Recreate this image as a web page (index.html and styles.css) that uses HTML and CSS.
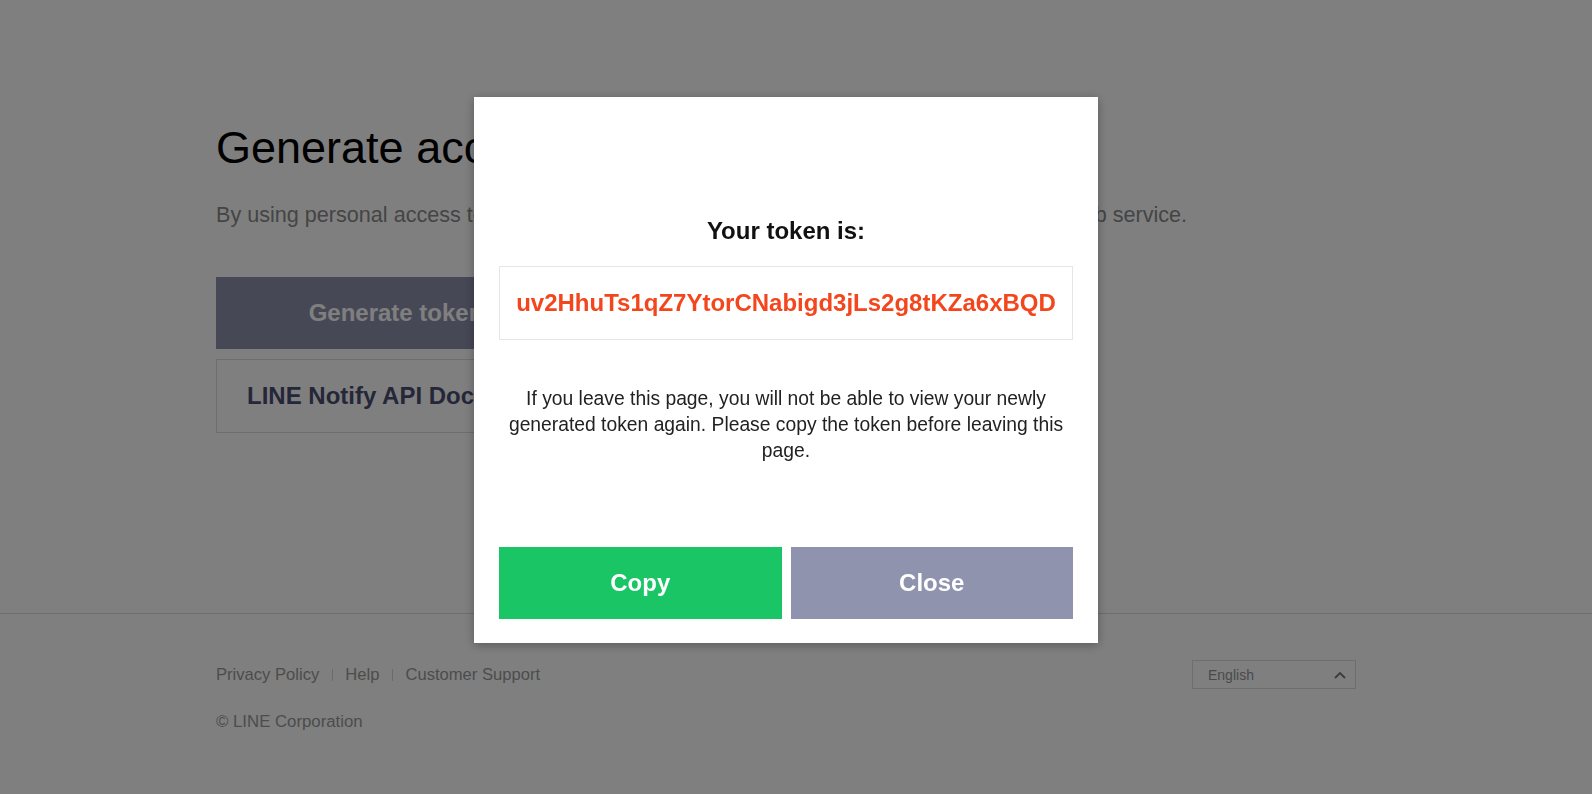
FILE: index.html
```html
<!DOCTYPE html>
<html lang="en">
<head>
<meta charset="utf-8">
<title>LINE Notify</title>
<link rel="stylesheet" href="styles.css">
</head>
<body>
<div class="page">
  <main class="main">
    <div class="container">
      <h1 class="title">Generate access token (For developers)</h1>
      <p class="desc">By using personal access tokens, you can configure notifications without having to add a web service.</p>
      <div class="actions">
        <button class="btn-generate">Generate token</button>
        <a class="doc-link" href="#">LINE Notify API Document</a>
      </div>
    </div>
  </main>
  <footer class="footer">
    <div class="container">
      <div class="footer-row">
        <nav class="footer-links">
          <a href="#">Privacy Policy</a>
          <span class="sep"></span>
          <a href="#">Help</a>
          <span class="sep"></span>
          <a href="#">Customer Support</a>
        </nav>
        <div class="lang">
          <span>English</span>
          <svg class="chev" width="12" height="8" viewBox="0 0 12 8"><polyline points="1,7 6,2 11,7" fill="none" stroke="#777" stroke-width="1.8"/></svg>
        </div>
      </div>
      <p class="copy">© LINE Corporation</p>
    </div>
  </footer>
</div>

<div class="overlay">
  <div class="modal">
    <h2 class="modal-title">Your token is:</h2>
    <div class="token-box">uv2HhuTs1qZ7YtorCNabigd3jLs2g8tKZa6xBQD</div>
    <p class="notice">If you leave this page, you will not be able to view your newly generated token again. Please copy the token before leaving this page.</p>
    <div class="modal-buttons">
      <button class="btn btn-copy">Copy</button>
      <button class="btn btn-close">Close</button>
    </div>
  </div>
</div>
</body>
</html>
```

FILE: styles.css
```css
* { box-sizing: border-box; }

html, body {
  margin: 0;
  padding: 0;
  height: 100%;
}

body {
  font-family: "Liberation Sans", Arial, sans-serif;
  background: #ffffff;
  color: #000;
  overflow: hidden;
}

.page {
  min-height: 100%;
}

.main {
  padding: 122px 20px 0 0;
  height: 613px;
}

.container {
  width: 1140px;
  margin: 0 auto;
}

.title {
  margin: 0;
  font-size: 45px;
  line-height: 52px;
  font-weight: normal;
  color: #000;
  white-space: nowrap;
}

.desc {
  margin: 26px 0 0;
  font-size: 21.6px;
  line-height: 30px;
  color: #8a8a8a;
  white-space: nowrap;
}

.actions {
  margin-top: 47px;
  display: flex;
  flex-direction: column;
  gap: 10px;
  width: 580px;
}

.btn-generate {
  height: 72px;
  border: 0;
  background: #8d90ac;
  color: #fff;
  font-family: inherit;
  font-size: 24px;
  font-weight: bold;
  padding: 0;
  width: 360px;
  text-align: center;
}

.doc-link {
  display: flex;
  align-items: center;
  height: 74px;
  border: 1px solid #dcdcdc;
  padding-left: 30px;
  font-size: 24px;
  font-weight: bold;
  color: #4a4f72;
  text-decoration: none;
  white-space: nowrap;
}

.footer {
  border-top: 1px solid #dcdcdc;
  padding: 46px 20px 0 0;
}

.footer-row {
  display: flex;
  align-items: center;
  justify-content: space-between;
}

.footer-links {
  display: flex;
  align-items: center;
}

.footer-links a {
  font-size: 16.6px;
  line-height: 20px;
  color: #999;
  text-decoration: none;
}

.sep {
  width: 1px;
  height: 12px;
  background: #d6d6d6;
  margin: 0 12.5px;
}

.lang {
  width: 164px;
  height: 29px;
  border: 1px solid #dcdcdc;
  display: flex;
  align-items: center;
  justify-content: space-between;
  padding: 0 9px 0 15px;
  font-size: 14px;
  color: #949494;
}

.chev {
  display: block;
}

.copy {
  margin: 23px 0 0;
  font-size: 16.8px;
  line-height: 20px;
  color: #999;
}

/* modal */
.overlay {
  position: fixed;
  inset: 0;
  background: rgba(0, 0, 0, 0.5);
  display: flex;
  justify-content: center;
  align-items: flex-start;
  padding: 97px 20px 0 0;
}

.modal {
  width: 624px;
  height: 546px;
  background: #fff;
  padding: 120px 25px 24px;
  display: flex;
  flex-direction: column;
  box-shadow: 0 2px 10px rgba(0, 0, 0, 0.3);
}

.modal-title {
  margin: 0;
  font-size: 24px;
  line-height: 28px;
  font-weight: bold;
  color: #111;
  text-align: center;
}

.token-box {
  margin-top: 21px;
  height: 74px;
  border: 1px solid #e6e6e6;
  display: flex;
  align-items: center;
  justify-content: center;
  font-size: 24px;
  font-weight: bold;
  color: #f4461d;
}

.notice {
  margin: 46px 0 0;
  font-size: 19.3px;
  line-height: 26px;
  color: #222;
  text-align: center;
}

.modal-buttons {
  margin-top: auto;
  display: flex;
  gap: 9px;
}

.btn {
  flex: 1;
  height: 72px;
  border: 0;
  font-family: inherit;
  font-size: 24px;
  font-weight: bold;
  color: #fff;
}

.btn-copy { background: #19c565; }
.btn-close { background: #8f93ad; }
```
